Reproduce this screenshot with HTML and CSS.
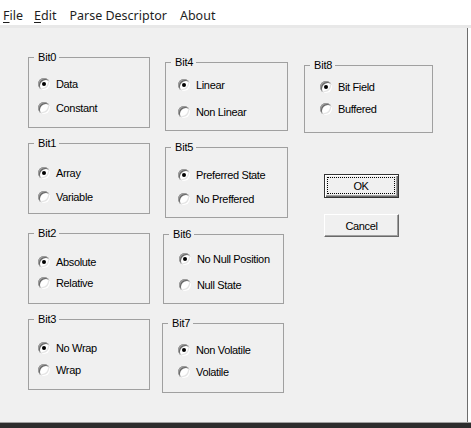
FILE: index.html
```html
<!DOCTYPE html>
<html>
<head>
<meta charset="utf-8">
<link rel="stylesheet" href="styles.css">
</head>
<body>
<div class="menubar">
  <span class="mi m-file"><u>F</u>ile</span>
  <span class="mi m-edit"><u>E</u>dit</span>
  <span class="mi m-parse">Parse Descriptor</span>
  <span class="mi m-about">About</span>
</div>
<div class="sep"></div>
<div class="window">
  <div class="dialog">
    <div class="col col1">
      <div class="group g0">
        <div class="legend">Bit0</div>
        <div class="opts">
          <div class="opt"><span class="radio on"></span>Data</div>
          <div class="opt"><span class="radio"></span>Constant</div>
        </div>
      </div>
      <div class="group g1">
        <div class="legend">Bit1</div>
        <div class="opts">
          <div class="opt"><span class="radio on"></span>Array</div>
          <div class="opt"><span class="radio"></span>Variable</div>
        </div>
      </div>
      <div class="group g2">
        <div class="legend">Bit2</div>
        <div class="opts">
          <div class="opt"><span class="radio on"></span>Absolute</div>
          <div class="opt"><span class="radio"></span>Relative</div>
        </div>
      </div>
      <div class="group g3">
        <div class="legend">Bit3</div>
        <div class="opts">
          <div class="opt"><span class="radio on"></span>No Wrap</div>
          <div class="opt"><span class="radio"></span>Wrap</div>
        </div>
      </div>
    </div>
    <div class="col col2">
      <div class="group g4">
        <div class="legend">Bit4</div>
        <div class="opts">
          <div class="opt"><span class="radio on"></span>Linear</div>
          <div class="opt"><span class="radio"></span>Non Linear</div>
        </div>
      </div>
      <div class="group g5">
        <div class="legend">Bit5</div>
        <div class="opts">
          <div class="opt"><span class="radio on"></span>Preferred State</div>
          <div class="opt"><span class="radio"></span>No Preffered</div>
        </div>
      </div>
      <div class="group g6">
        <div class="legend">Bit6</div>
        <div class="opts">
          <div class="opt"><span class="radio on"></span>No Null Position</div>
          <div class="opt"><span class="radio"></span>Null State</div>
        </div>
      </div>
      <div class="group g7">
        <div class="legend">Bit7</div>
        <div class="opts">
          <div class="opt"><span class="radio on"></span>Non Volatile</div>
          <div class="opt"><span class="radio"></span>Volatile</div>
        </div>
      </div>
    </div>
    <div class="col col3">
      <div class="group g8">
        <div class="legend">Bit8</div>
        <div class="opts">
          <div class="opt"><span class="radio on"></span>Bit Field</div>
          <div class="opt"><span class="radio"></span>Buffered</div>
        </div>
      </div>
      <div class="btn btn-ok"><span class="focus">OK</span></div>
      <div class="btn btn-cancel">Cancel</div>
    </div>
  </div>
  <div class="edge"></div>
</div>
<div class="bottombar"></div>
</body>
</html>
```
FILE: styles.css
```css
html, body {
  margin: 0;
  padding: 0;
}
body {
  width: 471px;
  height: 428px;
  overflow: hidden;
  background: #ffffff;
  font-family: "Liberation Sans", Arial, sans-serif;
}

/* menu */
.menubar {
  height: 25px;
  background: #ffffff;
  display: flex;
  align-items: center;
  font-family: "Noto Sans", sans-serif;
  font-size: 12.5px;
  color: #1e1e1e;
}
.mi { line-height: 16px; padding-top: 7px; }
.mi u { text-underline-offset: 2px; }
.m-file { margin-left: 3px; }
.m-edit { margin-left: 11px; }
.m-parse { margin-left: 13px; }
.m-about { margin-left: 13px; }

.sep {
  height: 3px;
  background: #e8e8e8;
}

.window {
  display: flex;
  height: 394px;
}
.dialog {
  width: 467px;
  background: #f0f0f0;
  display: flex;
  padding-left: 28px;
  box-sizing: border-box;
  font-size: 11px;
  letter-spacing: -0.35px;
  color: #000;
}
.edge {
  width: 1px;
  background: #6d6d6d;
}
.bottombar {
  height: 6px;
  border-top: 1px solid #a0a0a0;
  background: #2d2d2d;
  box-sizing: border-box;
}

.col {
  display: flex;
  flex-direction: column;
  align-items: flex-start;
}
.col1 { width: 122px; }
.col2 { width: 126px; margin-left: 12px; }
.col3 { width: 129px; margin-left: 16px; }

.group {
  box-sizing: border-box;
  border: 1px solid #a0a0a0;
  display: flex;
  flex-direction: column;
  align-items: flex-start;
}
.legend {
  height: 13px;
  line-height: 13px;
  margin-top: -7px;
  margin-bottom: -6px;
  margin-left: 5px;
  padding: 0 3px 0 4px;
  background: #f0f0f0;
  letter-spacing: -0.2px;
}
.opts {
  display: flex;
  flex-direction: column;
}
.opt {
  display: flex;
  align-items: center;
  height: 14px;
  white-space: nowrap;
}
.radio {
  width: 12px;
  height: 12px;
  border-radius: 50%;
  background: #ffffff;
  box-sizing: border-box;
  margin-right: 6px;
  flex: none;
  display: flex;
  align-items: center;
  justify-content: center;
  box-shadow: inset 1px 1px 0 #a0a0a0, inset -1px -1px 0 #ffffff,
              inset 2px 2px 0 #696969, inset -2px -2px 0 #e3e3e3;
}
.radio.on::after {
  content: "";
  width: 4px;
  height: 4px;
  border-radius: 50%;
  background: #000;
}

.g0, .g1, .g2, .g3 { width: 122px; height: 71px; }
.g0, .g1, .g2, .g3 { --pl: 9px; }
.g0 .opts, .g1 .opts, .g2 .opts, .g3 .opts { padding-left: 9px; }
.g0 { margin-top: 29px; }
.g0 .opts { padding-top: 19px; gap: 10px; }
.g1 { margin-top: 15px; }
.g1 .opts { padding-top: 22px; gap: 10px; }
.g2 { margin-top: 19px; }
.g2 .opts { padding-top: 21px; gap: 7px; }
.g3 { margin-top: 15px; }
.g3 .opts { padding-top: 21px; gap: 8px; }

.g4 { margin-top: 34px; margin-left: 3px; width: 123px; height: 69px; }
.g4 .opts { padding-left: 12px; padding-top: 15px; gap: 13px; }
.g5 { margin-top: 16px; margin-left: 3px; width: 123px; height: 71px; }
.g5 .opts { padding-left: 12px; padding-top: 20px; gap: 10px; }
.g6 { margin-top: 16px; margin-left: 1px; width: 121px; height: 70px; }
.g6 .opts { padding-left: 15px; padding-top: 17px; gap: 12px; }
.g7 { margin-top: 19px; width: 122px; height: 70px; }
.g7 .opts { padding-left: 15px; padding-top: 19px; gap: 8px; }

.g8 { margin-top: 37px; width: 129px; height: 68px; }
.g8 .opts { padding-left: 15px; padding-top: 14px; gap: 8px; }

.btn {
  box-sizing: border-box;
  width: 75px;
  margin-left: 20px;
  background: #f0f0f0;
  display: flex;
  align-items: center;
  justify-content: center;
  font-size: 11px;
}
.btn-ok {
  margin-top: 41px;
  height: 24px;
  border: 1px solid #333333;
  box-shadow: inset 1px 1px 0 #ffffff, inset -1px -1px 0 #696969, inset -2px -2px 0 #a0a0a0;
  padding: 3px 4px 4px 3px;
}
.focus {
  flex: 1;
  align-self: stretch;
  display: flex;
  align-items: center;
  justify-content: center;
  outline: 1px dotted #000;
}
.btn-cancel {
  margin-top: 16px;
  height: 23px;
  border: 1px solid;
  border-color: #ffffff #696969 #696969 #ffffff;
  box-shadow: inset -1px -1px 0 #a0a0a0;
}
```
